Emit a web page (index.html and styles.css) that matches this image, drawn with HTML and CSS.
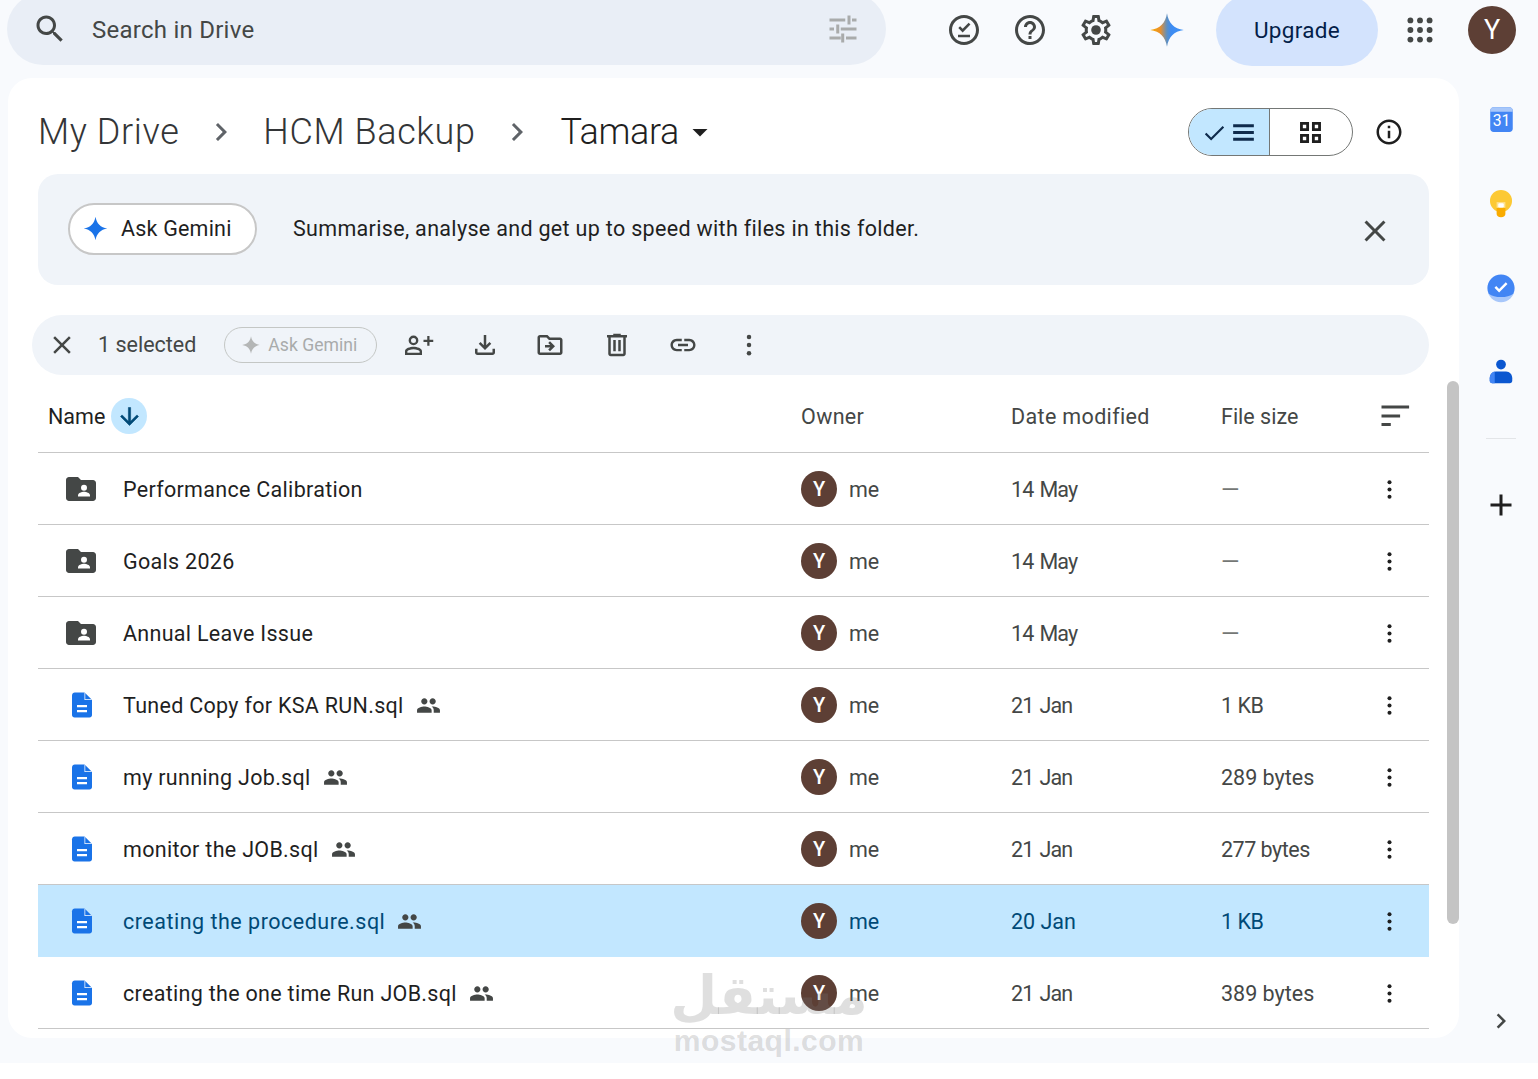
FILE: index.html
```html
<!DOCTYPE html>
<html lang="en">
<head>
<meta charset="utf-8">
<title>Tamara - Google Drive</title>
<link rel="stylesheet" href="styles.css">
</head>
<body>
<svg class="defs" width="0" height="0" aria-hidden="true">
  <defs>
    <symbol id="i-more" viewBox="0 0 24 24"><circle cx="12" cy="5.500" r="1.800"/><circle cx="12" cy="12" r="1.800"/><circle cx="12" cy="18.500" r="1.800"/></symbol>
    <symbol id="i-people" viewBox="0 0 24 24"><path d="M16 11c1.660 0 2.990-1.340 2.990-3S17.660 5 16 5c-1.660 0-3 1.340-3 3s1.340 3 3 3zm-8 0c1.660 0 2.990-1.340 2.990-3S9.660 5 8 5C6.340 5 5 6.340 5 8s1.340 3 3 3zm0 2c-2.330 0-7 1.170-7 3.500V19h14v-2.500c0-2.330-4.670-3.500-7-3.500zm8 0c-.29 0-.62.02-.97.05 1.160.84 1.970 1.970 1.970 3.450V19h6v-2.500c0-2.330-4.670-3.500-7-3.500z"/></symbol>
    <symbol id="i-doc" viewBox="0 0 24 24"><path fill="#1a73e8" d="M6.200 2h7.800l6 6v12c0 1.100-.9 2-2 2H6c-1.100 0-2-.9-2-2V4.200C4 3 5 2 6.200 2z"/><path fill="#fff" d="M14 2v6h6z"/><path fill="#1a73e8" d="M14.600 2.600 19.400 7.400h-4.800z"/><path fill="#fff" d="M8 12h8v1.800H8zM8 16h8v1.800H8z"/></symbol>
    <symbol id="i-folder" viewBox="0 0 24 24"><path fill="#444746" d="M10 4H4c-1.100 0-2 .9-2 2v12c0 1.100.9 2 2 2h16c1.100 0 2-.9 2-2V8c0-1.100-.9-2-2-2h-8l-2-2z"/><circle fill="#fff" cx="14" cy="11.200" r="2"/><path fill="#fff" d="M10 16.200c0-1.500 2.600-2.300 4-2.300s4 .8 4 2.300V17h-8z"/></symbol>
    <symbol id="i-spark" viewBox="0 0 24 24"><path d="M12 1.500C12.900 7.400 16.600 11.100 22.500 12 16.600 12.900 12.900 16.600 12 22.500 11.100 16.600 7.400 12.900 1.500 12 7.400 11.100 11.100 7.400 12 1.500z"/></symbol>
    <symbol id="i-gemini" viewBox="0 0 24 24"><defs><linearGradient id="gem" x1="0" x2="1" y1="0" y2="0"><stop offset="0" stop-color="#f9ab00"/><stop offset=".3" stop-color="#e98f2c"/><stop offset=".5" stop-color="#5b8fc4"/><stop offset=".62" stop-color="#3d8bf2"/><stop offset="1" stop-color="#4394f5"/></linearGradient></defs><path fill="url(#gem)" d="M12 .8C13 7.400 16.600 11 23.200 12 16.600 13 13 16.600 12 23.200 11 16.600 7.400 13 .8 12 7.400 11 11 7.400 12 .8z"/></symbol>
  </defs>
</svg>

<div class="app">
  <header class="topbar">
    <div class="search">
      <svg class="ic ic-36 c-sec" viewBox="0 0 24 24"><path d="M15.500 14h-.79l-.28-.27C15.410 12.590 16 11.110 16 9.500 16 5.910 13.090 3 9.500 3S3 5.910 3 9.500 5.910 16 9.500 16c1.610 0 3.090-.59 4.230-1.570l.27.28v.79l5 4.990L20.490 19l-4.990-5zm-6 0C7.010 14 5 11.990 5 9.500S7.010 5 9.500 5 14 7.010 14 9.500 11.990 14 9.500 14z"/></svg>
      <span class="search-text">Search in Drive</span>
      <svg class="ic ic-36 c-tune tune" viewBox="0 0 24 24"><path d="M3 5h10.500v2H3zM15 3h2v6h-2zM18 5h3v2h-3zM3 11h3v2H3zM7.500 9h2v6h-2zM10.500 11H21v2H10.500zM3 17h7.500v2H3zM10.800 15h2v6h-2zM14 17h7v2h-7z"/></svg>
    </div>
    <button class="tb-btn first"><svg class="ic ic-36 c-sec" viewBox="0 0 24 24"><path d="M12 2C6.480 2 2 6.480 2 12s4.480 10 10 10 10-4.480 10-10S17.520 2 12 2zm0 18c-4.410 0-8-3.590-8-8s3.590-8 8-8 8 3.590 8 8-3.590 8-8 8z"/><path d="M11.100 13.600 8.200 10.700l1.200-1.200 1.700 1.700 4-4 1.200 1.200zM8 15.200h8v1.600H8z"/></svg></button>
    <button class="tb-btn"><svg class="ic ic-36 c-sec" viewBox="0 0 24 24"><path d="M11 18h2v-2h-2v2zm1-16C6.480 2 2 6.480 2 12s4.480 10 10 10 10-4.480 10-10S17.520 2 12 2zm0 18c-4.410 0-8-3.590-8-8s3.590-8 8-8 8 3.590 8 8-3.590 8-8 8zm0-14c-2.210 0-4 1.790-4 4h2c0-1.100.9-2 2-2s2 .9 2 2c0 2-3 1.750-3 5h2c0-2.250 3-2.500 3-5 0-2.210-1.790-4-4-4z"/></svg></button>
    <button class="tb-btn"><svg class="ic ic-36 c-sec" viewBox="0 0 24 24"><path d="M19.430 12.980c.04-.32.07-.64.07-.98 0-.34-.03-.66-.07-.98l2.110-1.650c.19-.15.24-.42.12-.64l-2-3.460c-.09-.16-.26-.25-.44-.25-.06 0-.12.01-.17.03l-2.490 1c-.52-.4-1.080-.73-1.690-.98l-.38-2.650C14.460 2.180 14.250 2 14 2h-4c-.25 0-.46.18-.49.42l-.38 2.650c-.61.25-1.170.59-1.690.98l-2.490-1c-.06-.02-.12-.03-.18-.03-.17 0-.34.09-.43.25l-2 3.460c-.13.22-.07.49.12.64l2.110 1.650c-.04.32-.07.65-.07.98 0 .33.03.66.07.98l-2.110 1.650c-.19.15-.24.42-.12.64l2 3.460c.09.16.26.25.44.25.06 0 .12-.01.17-.03l2.490-1c.52.4 1.080.73 1.690.98l.38 2.650c.03.24.24.42.49.42h4c.25 0 .46-.18.49-.42l.38-2.650c.61-.25 1.170-.59 1.690-.98l2.490 1c.06.02.12.03.18.03.17 0 .34-.09.43-.25l2-3.460c.12-.22.07-.49-.12-.64l-2.110-1.650zm-1.980-1.710c.04.31.05.52.05.73 0 .21-.02.43-.05.73l-.14 1.130.89.7 1.080.84-.7 1.210-1.270-.51-1.040-.42-.9.68c-.43.32-.84.56-1.250.73l-1.060.43-.16 1.130-.2 1.350h-1.400l-.19-1.350-.16-1.130-1.060-.43c-.43-.18-.83-.41-1.230-.71l-.91-.7-1.060.43-1.270.51-.7-1.210 1.080-.84.89-.7-.14-1.130c-.03-.31-.05-.54-.05-.74s.02-.43.05-.73l.14-1.130-.89-.7-1.080-.84.7-1.210 1.270.51 1.040.42.9-.68c.43-.32.84-.56 1.250-.73l1.060-.43.16-1.130.2-1.350h1.390l.19 1.350.16 1.130 1.060.43c.43.18.83.41 1.230.71l.91.7 1.060-.43 1.270-.51.7 1.210-1.070.85-.89.7.14 1.130z"/><circle cx="12" cy="12" r="3.200"/></svg></button>
    <button class="tb-btn gem"><svg class="ic ic-36" viewBox="0 0 24 24"><use href="#i-gemini"/></svg></button>
    <button class="upgrade">Upgrade</button>
    <button class="tb-btn apps"><svg class="ic ic-36 c-sec" viewBox="0 0 24 24"><circle cx="5.600" cy="5.600" r="1.950"/><circle cx="12" cy="5.600" r="1.950"/><circle cx="18.400" cy="5.600" r="1.950"/><circle cx="5.600" cy="12" r="1.950"/><circle cx="12" cy="12" r="1.950"/><circle cx="18.400" cy="12" r="1.950"/><circle cx="5.600" cy="18.400" r="1.950"/><circle cx="12" cy="18.400" r="1.950"/><circle cx="18.400" cy="18.400" r="1.950"/></svg></button>
    <div class="account">Y</div>
  </header>

  <div class="body-row">
    <main class="panel">
      <div class="content">
        <div class="crumbs">
          <span class="crumb">My Drive</span>
          <svg class="ic ic-36 c-mid sep" viewBox="0 0 24 24"><path d="M8.590 16.590 13.170 12 8.590 7.410 10 6l6 6-6 6z"/></svg>
          <span class="crumb">HCM Backup</span>
          <svg class="ic ic-36 c-mid sep" viewBox="0 0 24 24"><path d="M8.590 16.590 13.170 12 8.590 7.410 10 6l6 6-6 6z"/></svg>
          <span class="crumb current">Tamara</span>
          <svg class="ic ic-36 c-pri caret" viewBox="0 0 24 24"><path d="M7 10l5 5 5-5z"/></svg>
          <div class="crumb-tools">
            <div class="toggle">
              <div class="toggle-on">
                <svg class="ic ic-27 c-navy" viewBox="0 0 24 24"><path d="M9 16.400 4.800 12.200 3.400 13.600 9 19.200 20.600 7.600 19.200 6.200z"/></svg>
                <svg class="ic ic-27 c-navy" viewBox="0 0 24 24"><path d="M2.800 4.600h18.400v2.800H2.800zM2.800 10.600h18.400v2.800H2.800zM2.800 16.600h18.400v2.800H2.800z"/></svg>
              </div>
              <div class="toggle-off">
                <svg class="ic ic-27 c-pri" viewBox="0 0 24 24"><path fill-rule="evenodd" d="M2.700 2.700h8v8h-8zM5.200 5.200v3h3v-3zM13.300 2.700h8v8h-8zM15.800 5.200v3h3v-3zM2.700 13.300h8v8h-8zM5.200 15.800v3h3v-3zM13.300 13.300h8v8h-8zM15.800 15.800v3h3v-3z"/></svg>
              </div>
            </div>
            <svg class="ic ic-30 c-pri info" viewBox="0 0 24 24"><path d="M11 7h2v2h-2zm0 4h2v6h-2zm1-9C6.480 2 2 6.480 2 12s4.480 10 10 10 10-4.480 10-10S17.520 2 12 2zm0 18c-4.410 0-8-3.590-8-8s3.590-8 8-8 8 3.590 8 8-3.590 8-8 8z"/></svg>
          </div>
        </div>

        <section class="banner">
          <button class="ask">
            <svg class="ic ic-27 c-blue" viewBox="0 0 24 24"><use href="#i-spark"/></svg>
            <span>Ask Gemini</span>
          </button>
          <span class="banner-text">Summarise, analyse and get up to speed with files in this folder.</span>
          <svg class="ic ic-36 c-sec banner-close" viewBox="0 0 24 24"><path d="M19 6.410 17.590 5 12 10.590 6.410 5 5 6.410 10.590 12 5 17.590 6.410 19 12 13.410 17.590 19 19 17.590 13.410 12z"/></svg>
        </section>

        <section class="selbar">
          <svg class="ic ic-30 c-sec" viewBox="0 0 24 24"><path d="M19 6.410 17.590 5 12 10.590 6.410 5 5 6.410 10.590 12 5 17.590 6.410 19 12 13.410 17.590 19 19 17.590 13.410 12z"/></svg>
          <span class="sel-count">1 selected</span>
          <button class="ask-off">
            <svg class="ic ic-20 c-dis" viewBox="0 0 24 24"><use href="#i-spark"/></svg>
            <span>Ask Gemini</span>
          </button>
          <div class="sel-actions">
            <svg class="ic ic-30 c-sec" viewBox="0 0 24 24"><path fill-rule="evenodd" d="M7.600 4.400a3.900 3.900 0 1 0 0 7.800 3.900 3.900 0 0 0 0-7.800zm0 1.900a2 2 0 1 1 0 4 2 2 0 0 1 0-4zM7.600 13.400c-2.800 0-6.800 1.200-6.800 3.500V20h13.600v-3.100c0-2.300-4-3.500-6.800-3.500zm0 1.900c2.300 0 4.600.9 4.900 1.700v1.100H2.700V17c.3-.8 2.600-1.700 4.900-1.700z"/><path d="M18.600 4.800v3h-3v1.800h3v3h1.800v-3h3V7.800h-3v-3z"/></svg>
            <svg class="ic ic-30 c-sec" viewBox="0 0 24 24"><path d="M18 15v3H6v-3H4v3c0 1.100.9 2 2 2h12c1.100 0 2-.9 2-2v-3h-2zm-1-4-1.410-1.410L13 12.170V4h-2v8.170L8.410 9.590 7 11l5 5 5-5z"/></svg>
            <svg class="ic ic-30 c-sec move" viewBox="0 0 24 24"><path d="M20 6h-8l-2-2H4c-1.100 0-1.990.9-1.990 2L2 18c0 1.100.9 2 2 2h16c1.100 0 2-.9 2-2V8c0-1.100-.9-2-2-2zm0 12H4V6h5.170l2 2H20v10zm-8.010-9-1.410 1.410L12.160 12H8v2h4.160l-1.590 1.590L11.990 17 16 13.010 11.990 9z"/></svg>
            <svg class="ic ic-30 c-sec" viewBox="0 0 24 24"><path d="M15 4V3H9v1H4v2h1v13c0 1.100.9 2 2 2h10c1.100 0 2-.9 2-2V6h1V4h-5zm2 15H7V6h10v13zM9 8h2v9H9zm4 0h2v9h-2z"/></svg>
            <svg class="ic ic-30 c-sec" viewBox="0 0 24 24"><path d="M3.900 12c0-1.710 1.390-3.100 3.100-3.100h4V7H7c-2.760 0-5 2.240-5 5s2.240 5 5 5h4v-1.900H7c-1.710 0-3.100-1.390-3.100-3.100zM8 13h8v-2H8v2zm9-6h-4v1.900h4c1.710 0 3.100 1.390 3.100 3.100s-1.390 3.100-3.100 3.100h-4V17h4c2.760 0 5-2.240 5-5s-2.240-5-5-5z"/></svg>
            <svg class="ic ic-30 c-sec" viewBox="0 0 24 24"><use href="#i-more"/></svg>
          </div>
        </section>

        <section class="table">
          <div class="row head">
            <div class="cell name-head">
              <span>Name</span>
              <span class="sort-dir"><svg class="ic ic-27 c-sel arrow" viewBox="0 0 24 24"><path d="M20 12l-1.410-1.410L13 16.170V4h-2v12.170l-5.580-5.590L4 12l8 8 8-8z"/></svg></span>
            </div>
            <div class="cell wide">Owner</div>
            <div class="cell wide">Date modified</div>
            <div class="cell">File size</div>
            <div class="cell sort-cell"><svg class="ic ic-36 c-sec" viewBox="0 0 24 24"><path d="M3 5h18.400v2H3zM3 11h12.400v2H3zM3 16.700h6.200v2H3z"/></svg></div>
          </div>

          <div class="row">
            <div class="cell name"><svg class="ic ic-36 type" viewBox="0 0 24 24"><use href="#i-folder"/></svg><span>Performance Calibration</span></div>
            <div class="cell owner"><span class="avatar">Y</span><span>me</span></div>
            <div class="cell date">14 May</div><div class="cell dash">—</div>
            <div class="cell more"><svg class="ic ic-27 c-pri" viewBox="0 0 24 24"><use href="#i-more"/></svg></div>
          </div>
          <div class="row">
            <div class="cell name"><svg class="ic ic-36 type" viewBox="0 0 24 24"><use href="#i-folder"/></svg><span>Goals 2026</span></div>
            <div class="cell owner"><span class="avatar">Y</span><span>me</span></div>
            <div class="cell date">14 May</div><div class="cell dash">—</div>
            <div class="cell more"><svg class="ic ic-27 c-pri" viewBox="0 0 24 24"><use href="#i-more"/></svg></div>
          </div>
          <div class="row">
            <div class="cell name"><svg class="ic ic-36 type" viewBox="0 0 24 24"><use href="#i-folder"/></svg><span>Annual Leave Issue</span></div>
            <div class="cell owner"><span class="avatar">Y</span><span>me</span></div>
            <div class="cell date">14 May</div><div class="cell dash">—</div>
            <div class="cell more"><svg class="ic ic-27 c-pri" viewBox="0 0 24 24"><use href="#i-more"/></svg></div>
          </div>
          <div class="row">
            <div class="cell name"><svg class="ic ic-30 type doc" viewBox="0 0 24 24"><use href="#i-doc"/></svg><span>Tuned Copy for KSA RUN.sql</span><svg class="ic c-sec shared" viewBox="0 0 24 24"><use href="#i-people"/></svg></div>
            <div class="cell owner"><span class="avatar">Y</span><span>me</span></div>
            <div class="cell date">21 Jan</div><div class="cell size">1 KB</div>
            <div class="cell more"><svg class="ic ic-27 c-pri" viewBox="0 0 24 24"><use href="#i-more"/></svg></div>
          </div>
          <div class="row">
            <div class="cell name"><svg class="ic ic-30 type doc" viewBox="0 0 24 24"><use href="#i-doc"/></svg><span>my running Job.sql</span><svg class="ic c-sec shared" viewBox="0 0 24 24"><use href="#i-people"/></svg></div>
            <div class="cell owner"><span class="avatar">Y</span><span>me</span></div>
            <div class="cell date">21 Jan</div><div class="cell">289 bytes</div>
            <div class="cell more"><svg class="ic ic-27 c-pri" viewBox="0 0 24 24"><use href="#i-more"/></svg></div>
          </div>
          <div class="row">
            <div class="cell name"><svg class="ic ic-30 type doc" viewBox="0 0 24 24"><use href="#i-doc"/></svg><span>monitor the JOB.sql</span><svg class="ic c-sec shared" viewBox="0 0 24 24"><use href="#i-people"/></svg></div>
            <div class="cell owner"><span class="avatar">Y</span><span>me</span></div>
            <div class="cell date">21 Jan</div><div class="cell size">277 bytes</div>
            <div class="cell more"><svg class="ic ic-27 c-pri" viewBox="0 0 24 24"><use href="#i-more"/></svg></div>
          </div>
          <div class="row selected">
            <div class="cell name"><svg class="ic ic-30 type doc" viewBox="0 0 24 24"><use href="#i-doc"/></svg><span>creating the procedure.sql</span><svg class="ic c-sec shared" viewBox="0 0 24 24"><use href="#i-people"/></svg></div>
            <div class="cell owner"><span class="avatar">Y</span><span>me</span></div>
            <div class="cell">20 Jan</div><div class="cell size">1 KB</div>
            <div class="cell more"><svg class="ic ic-27 c-pri" viewBox="0 0 24 24"><use href="#i-more"/></svg></div>
          </div>
          <div class="row">
            <div class="cell name"><svg class="ic ic-30 type doc" viewBox="0 0 24 24"><use href="#i-doc"/></svg><span>creating the one time Run JOB.sql</span><svg class="ic c-sec shared" viewBox="0 0 24 24"><use href="#i-people"/></svg></div>
            <div class="cell owner"><span class="avatar">Y</span><span>me</span></div>
            <div class="cell date">21 Jan</div><div class="cell">389 bytes</div>
            <div class="cell more"><svg class="ic ic-27 c-pri" viewBox="0 0 24 24"><use href="#i-more"/></svg></div>
          </div>
        </section>
      </div>
      <div class="scrollbar"></div>
    </main>

    <aside class="rail">
      <div class="rail-icon cal"><svg class="ic ic-27" viewBox="0 0 24 24"><path fill="#4285f4" d="M5 1h14c1.800 0 3 1.200 3 3v16c0 1.800-1.200 3-3 3H5c-1.800 0-3-1.200-3-3V4c0-1.800 1.200-3 3-3z"/><path fill="#a8c7fa" d="M5 1h14c1.800 0 3 1.200 3 3v1H2V4c0-1.800 1.200-3 3-3z"/><text class="cal-num" x="12" y="17.500" text-anchor="middle">31</text></svg></div>
      <div class="rail-icon"><svg class="ic ic-30" viewBox="0 0 24 24"><circle fill="#fcc934" cx="12" cy="9.500" r="8.800"/><path fill="#f9ab00" d="M8.500 15h7v5c0 1.500-1.300 2.500-3.500 2.500S8.500 21.500 8.500 20z"/><path fill="#fde293" d="M8.500 10.500h7v4.500h-7z"/><rect fill="#fff" x="9.800" y="11.300" width="4.400" height="3.400" rx="1"/></svg></div>
      <div class="rail-icon"><svg class="ic ic-30" viewBox="0 0 24 24"><circle fill="#a8c7fa" cx="12" cy="12.500" r="10.800"/><path fill="#4285f4" d="M1.200 12C1.200 6 6 1.200 12 1.200S22.800 6 22.800 12c0 1.600-.3 3.100-1 4.500-2.200 1.700-5.900 2.700-9.800 2.700s-7.600-1-9.800-2.700c-.7-1.400-1-2.900-1-4.500z"/><path fill="#fff" d="M10.500 15.500 6.800 11.800l1.400-1.400 2.300 2.300 5.300-5.300 1.400 1.400z"/></svg></div>
      <div class="rail-icon"><svg class="ic ic-30" viewBox="0 0 24 24"><circle fill="#0b57d0" cx="12" cy="6" r="3.900"/><path fill="#0b57d0" d="M8 11.500h8c3 0 5 2.500 5 5.500v2c0 1.300-.8 2-2 2H5c-1.200 0-2-.7-2-2v-2c0-3 2-5.500 5-5.500z"/><path fill="#4285f4" d="M7 11.600C4.600 12 3 14.300 3 17v2c0 1.300.8 2 2 2h2z"/></svg></div>
      <div class="rail-div"></div>
      <svg class="ic ic-36 c-pri rail-add" viewBox="0 0 24 24"><path d="M19 13h-6v6h-2v-6H5v-2h6V5h2v6h6v2z" /></svg>
      <svg class="ic ic-30 c-sec rail-next" viewBox="0 0 24 24"><path d="M8.590 16.590 13.170 12 8.590 7.410 10 6l6 6-6 6z"/></svg>
    </aside>
  </div>
</div>

<div class="watermark">
  <div class="wm-ar" lang="ar" dir="rtl">مستقل</div>
  <div class="wm-en">mostaql.com</div>
</div>
</body>
</html>
```

FILE: styles.css
```css
* { box-sizing: border-box; }
html, body { margin: 0; padding: 0; }
body {
  position: relative;
  width: 1538px;
  height: 1079px;
  overflow: hidden;
  background: #fff;
  font-family: Roboto, "Noto Sans", sans-serif;
  color: #1f1f1f;
}
button { font: inherit; color: inherit; background: none; border: 0; padding: 0; }
.defs { position: absolute; }

.ic { display: block; flex: none; fill: currentColor; }
.ic-20 { width: 20px; height: 20px; }
.ic-27 { width: 27px; height: 27px; }
.ic-30 { width: 30px; height: 30px; }
.ic-36 { width: 36px; height: 36px; }
.c-sec { color: #444746; }
.c-pri { color: #1f1f1f; }
.c-mid { color: #5f6368; }
.c-navy { color: #0f2b4c; }
.c-blue { color: #1a73e8; }
.c-dis { color: #b4b6b6; }
.c-sel { color: #004a77; }
.c-tune { color: #a9abab; }

.app { height: 1063px; background: #f8fafd; }

/* top bar */
.topbar { display: flex; align-items: flex-start; height: 78px; padding-left: 7px; }
.search {
  display: flex;
  align-items: center;
  width: 879px;
  height: 72px;
  margin-top: -7px;
  padding: 0 25px;
  border-radius: 36px;
  background: #e9eef6;
}
.search-text { flex: 1; margin-left: 24px; padding-top: 2px; font-size: 24px; letter-spacing: .25px; color: #444746; }
.tb-btn { display: block; width: 36px; height: 36px; margin-top: 12px; margin-left: 30px; }
.tb-btn.first { margin-left: 60px; }
.tb-btn.gem { margin-left: 35px; }
.tb-btn.apps { margin-left: 24px; }
.upgrade {
  width: 162px;
  height: 72px;
  margin-top: -6px;
  margin-left: 31px;
  border-radius: 36px;
  background: #d3e3fd;
  color: #041e49;
  font-size: 22.500px;
  font-weight: 400;
  letter-spacing: .3px;
}
.account {
  width: 48px;
  height: 48px;
  margin-top: 6px;
  margin-left: 30px;
  border-radius: 50%;
  background: #5d3f35;
  color: #fff;
  font-size: 27px;
  line-height: 48px;
  text-align: center;
}

/* layout */
.body-row { display: flex; height: 985px; padding-left: 8px; }
.panel {
  display: flex;
  width: 1451px;
  height: 960px;
  padding-left: 30px;
  border-radius: 24px;
  background: #fff;
  overflow: hidden;
}
.content { width: 1391px; flex: none; }
.scrollbar {
  width: 12px;
  height: 543px;
  margin: 303px 0 0 18px;
  border-radius: 6px;
  background: #c4c4c4;
}

/* breadcrumbs */
.crumbs { display: flex; align-items: center; height: 96px; padding-top: 12px; }
.crumb { font-size: 36px; font-weight: 300; letter-spacing: .6px; color: #333537; }
.crumb.current { margin-left: 1px; color: #1f1f1f; letter-spacing: -.4px; }
.sep { margin: 0 24px 0 24px; }
.caret { margin-left: 3px; }
.crumb-tools { display: flex; align-items: center; margin-left: auto; margin-right: 25px; }
.toggle {
  display: flex;
  width: 165px;
  height: 48px;
  border: 1.500px solid #747775;
  border-radius: 24px;
  overflow: hidden;
}
.toggle-on {
  display: flex;
  align-items: center;
  justify-content: center;
  gap: 2px;
  width: 81px;
  background: #c2e7ff;
  border-right: 1.500px solid #747775;
}
.toggle-off { display: flex; align-items: center; justify-content: center; flex: 1; padding-right: 1px; }
.info { margin-left: 21px; }

/* gemini banner */
.banner {
  display: flex;
  align-items: center;
  height: 111px;
  padding: 0 36px 0 30px;
  border-radius: 20px;
  background: #f0f4f9;
}
.ask {
  display: flex;
  align-items: center;
  width: 189px;
  height: 52px;
  padding-left: 12px;
  margin-top: -2px;
  border: 2px solid #c7c7c7;
  border-radius: 26px;
  background: #fff;
  font-size: 21.500px;
  letter-spacing: .2px;
  color: #1f1f1f;
}
.ask span { margin-left: 12px; }
.banner-text { flex: 1; margin: -3px 0 0 36px; font-size: 21.500px; letter-spacing: .32px; color: #1f1f1f; }
.banner-close { margin-top: 2px; }

/* selection bar */
.selbar {
  display: flex;
  align-items: center;
  width: 1397px;
  height: 60px;
  margin: 30px 0 0 -6px;
  padding-left: 15px;
  border-radius: 30px;
  background: #f0f4f9;
}
.sel-count { margin: -2px 0 0 21px; font-size: 21.500px; color: #444746; }
.ask-off {
  display: flex;
  align-items: center;
  width: 153px;
  height: 36px;
  margin-left: 28px;
  padding-left: 16px;
  border: 1.500px solid #c4c7c5;
  border-radius: 18px;
  font-size: 17.600px;
  color: #a9abab;
}
.ask-off span { margin-left: 7px; }
.sel-actions { display: flex; align-items: center; gap: 36px; margin-left: 27px; }
.move { margin: 0 1px 0 -1px; }

/* file table */
.row {
  display: grid;
  grid-template-columns: 763px 210px 210px 128px 80px;
  align-items: center;
  height: 72px;
  padding-top: 1px;
  border-bottom: 1.500px solid #c7c7c7;
  font-size: 21.500px;
  color: #444746;
}
.row.head { height: 78px; padding-top: 5px; color: #444746; }
.row.selected { background: #c2e7ff; color: #004a77; border-bottom-color: #c2e7ff; }
.cell { display: flex; align-items: center; }
.wide { letter-spacing: .35px; }
.date { letter-spacing: -.85px; word-spacing: 1.500px; }
.size { letter-spacing: -.5px; }
.dash { color: #747775; transform: scaleX(1.100); transform-origin: left; }
.name { color: #1f1f1f; letter-spacing: .3px; }
.selected .name { color: #004a77; letter-spacing: .5px; }
.name-head { padding-left: 10px; color: #1f1f1f; }
.sort-dir {
  display: flex;
  align-items: center;
  justify-content: center;
  width: 36px;
  height: 36px;
  margin-left: 6px;
  border-radius: 50%;
  background: #c2e7ff;
}
.arrow { stroke: currentColor; stroke-width: .5; }
.sort-cell { justify-content: center; padding-left: 12px; }
.type { margin-left: 25px; margin-right: 24px; }
.type.doc { margin-left: 29px; margin-right: 26px; }
.shared { width: 25px; height: 25px; margin-left: 12px; }
.avatar {
  width: 36px;
  height: 36px;
  margin-right: 12px;
  border-radius: 50%;
  background: #5d3f35;
  color: #fff;
  font-size: 20px;
  font-weight: 500;
  line-height: 36px;
  text-align: center;
}
.more { justify-content: center; }

/* side rail */
.rail {
  display: flex;
  flex-direction: column;
  align-items: center;
  flex: 1;
  padding-left: 5px;
}
.rail-icon { display: flex; align-items: center; justify-content: center; height: 84px; }
.rail-icon.cal { padding-bottom: 2px; }
.cal-num { font-family: Roboto, sans-serif; font-size: 14px; font-weight: 400; fill: #fff; }
.rail-div { width: 30px; height: 1px; margin-top: 24px; background: #e3e5e8; }
.rail-add { margin-top: 48px; }
.rail-next { margin-top: 483px; }

/* watermark overlay */
.watermark {
  position: absolute;
  left: 640px;
  top: 966px;
  width: 258px;
  text-align: center;
  color: rgba(120, 120, 120, .24);
  font-weight: 700;
  pointer-events: none;
}
.wm-ar { font-family: "DejaVu Sans", sans-serif; font-size: 54px; line-height: 60px; }
.wm-en { font-family: "Liberation Sans", sans-serif; font-size: 30px; line-height: 30px; letter-spacing: .5px; }
```
